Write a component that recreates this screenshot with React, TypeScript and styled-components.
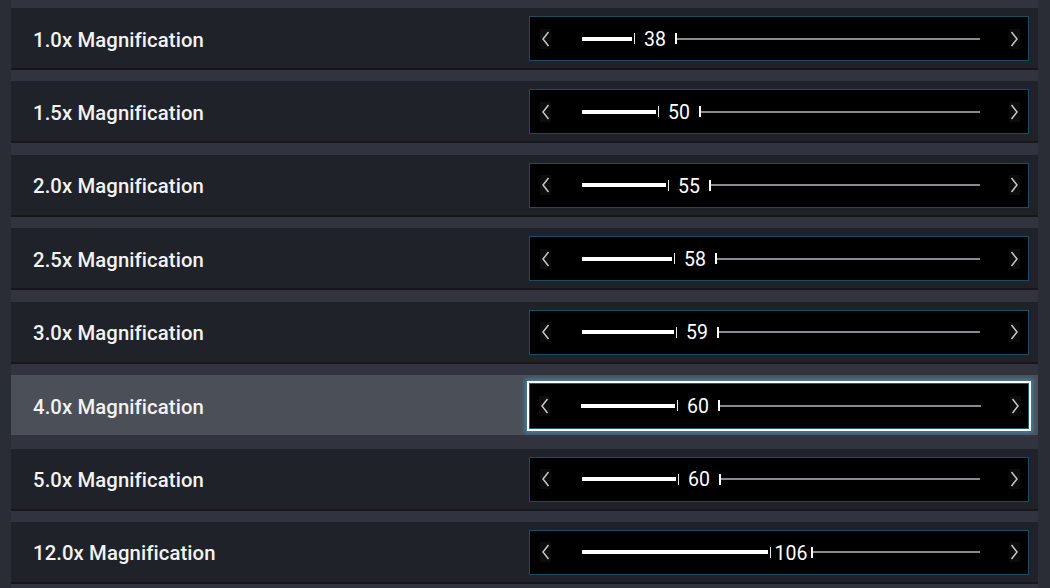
import React from 'react';
import styled, { createGlobalStyle, css } from 'styled-components';

const GlobalStyle = createGlobalStyle`
  html, body {
    margin: 0;
    padding: 0;
    background: #2b2d36;
    font-family: Roboto, "Noto Sans", "Liberation Sans", sans-serif;
  }
`;

const Page = styled.div`
  width: 1050px;
  height: 588px;
  overflow: hidden;
  padding: 0 12px 0 11px;
  box-sizing: border-box;
`;

const List = styled.div`
  display: flex;
  flex-direction: column;
  gap: 11.43px;
  padding-top: 8px;
  background: #31333e;
  min-height: 100%;
`;

const Row = styled.div<{ $active?: boolean }>`
  display: flex;
  align-items: center;
  justify-content: space-between;
  height: 62px;
  box-sizing: border-box;
  padding: 1px 9px 0 22px;
  background: ${({ $active }) => ($active ? '#4b4f58' : '#1f2228')};
  border-bottom: 2px solid ${({ $active }) => ($active ? '#31333e' : '#15171b')};
`;

const Label = styled.span`
  color: #f2f2f2;
  font-size: 20.3px;
  font-weight: 500;
  letter-spacing: 0.1px;
  padding-top: 2px;
`;

const Control = styled.div<{ $active?: boolean }>`
  display: flex;
  align-items: center;
  width: 500px;
  height: 45px;
  box-sizing: border-box;
  background: #000;
  border: 1px solid #1b4c61;

  ${({ $active }) =>
    $active &&
    css`
      width: 504px;
      height: 50px;
      margin-right: -2px;
      border: 2px solid #ffffff;
      box-shadow: inset 0 0 0 1px #1d5a73, 0 0 4px 2px rgba(64, 150, 190, 0.75);
    `}
`;

const Arrow = styled.button<{ $w: number }>`
  display: flex;
  align-items: center;
  justify-content: center;
  width: ${({ $w }) => $w}px;
  height: 100%;
  padding: 0;
  border: none;
  background: transparent;
`;

const ArrowGlyph = styled.svg`
  width: 11px;
  height: 20px;
  background: #0c0c0c;
`;

const Track = styled.div`
  flex: 1;
  display: flex;
  align-items: center;
  margin: 0 20px 0 22px;
  height: 12px;
`;

const Fill = styled.div`
  height: 4px;
  background: #ffffff;
  flex: none;
`;

const Value = styled.div`
  flex: none;
  width: 43px;
  height: 11px;
  box-sizing: border-box;
  border-left: 1px solid #e8e8e8;
  border-right: 2px solid #ffffff;
  margin-left: 2px;
  display: flex;
  align-items: center;
  justify-content: center;
  padding-top: 2px;
  color: #ffffff;
  font-size: 19.5px;
  font-weight: 400;
  line-height: 1;
`;

const Rest = styled.div`
  flex: 1;
  height: 2px;
  background: #8a8a8f;
`;

const Chevron = ({ dir }: { dir: 'left' | 'right' }) => (
  <ArrowGlyph viewBox="0 0 11 20">
    <path
      d={dir === 'left' ? 'M8.5 3 L3 10 L8.5 17' : 'M2.5 3 L8 10 L2.5 17'}
      fill="none"
      stroke="#c8c8c8"
      strokeWidth="1.5"
    />
  </ArrowGlyph>
);

interface Setting {
  label: string;
  value: number;
}

const settings: Setting[] = [
  { label: '1.0x Magnification', value: 38 },
  { label: '1.5x Magnification', value: 50 },
  { label: '2.0x Magnification', value: 55 },
  { label: '2.5x Magnification', value: 58 },
  { label: '3.0x Magnification', value: 59 },
  { label: '4.0x Magnification', value: 60 },
  { label: '5.0x Magnification', value: 60 },
  { label: '12.0x Magnification', value: 106 },
];

const ACTIVE = 5;

const App: React.FC = () => {
  return (
    <Page>
      <GlobalStyle />
      <List>
        {settings.map((s, i) => (
          <Row key={s.label} $active={i === ACTIVE}>
            <Label>{s.label}</Label>
            <Control $active={i === ACTIVE}>
              <Arrow $w={30}>
                <Chevron dir="left" />
              </Arrow>
              <Track>
                <Fill style={{ width: (s.value - 13) * 2 }} />
                <Value>{s.value}</Value>
                <Rest />
              </Track>
              <Arrow $w={28}>
                <Chevron dir="right" />
              </Arrow>
            </Control>
          </Row>
        ))}
      </List>
    </Page>
  );
};

export default App;
